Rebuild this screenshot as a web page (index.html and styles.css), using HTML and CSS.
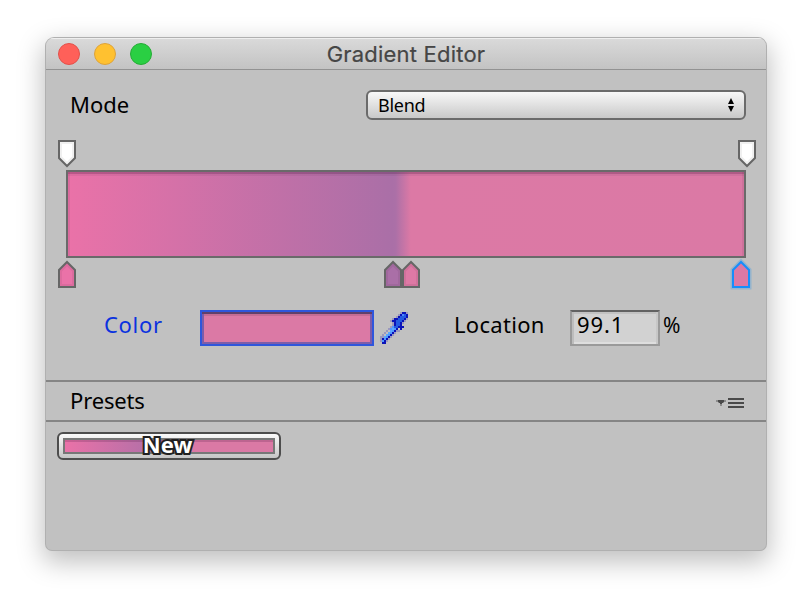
FILE: index.html
```html
<!DOCTYPE html>
<html lang="en">
<head>
<meta charset="utf-8">
<title>Gradient Editor</title>
<link rel="stylesheet" href="styles.css">
</head>
<body>
<main class="window">
  <header class="titlebar">
    <div class="lights"><i class="light close"></i><i class="light minimize"></i><i class="light zoom"></i></div>
    <h1 class="title"><span class="t-title">Gradient Editor</span></h1>
  </header>
  <section class="mode-row">
    <label class="t-mode">Mode</label>
    <div class="select"><span class="t-blend">Blend</span>
      <svg class="arrows" width="8" height="14" viewBox="0 0 8 14"><path d="M4 0L7 6H1ZM1 8H7L4 14Z"/></svg>
    </div>
  </section>
  <section class="editor">
    <div class="keys alpha">
      <svg class="key" width="18" height="28" viewBox="0 0 18 28"><path class="edge" d="M1 1H17V18L9 26L1 18Z" fill="#fff"/><path class="shade" d="M3 3H15V17L9 23L3 17Z"/></svg>
      <svg class="key" width="18" height="28" viewBox="0 0 18 28"><path class="edge" d="M1 1H17V18L9 26L1 18Z" fill="#fff"/><path class="shade" d="M3 3H15V17L9 23L3 17Z"/></svg>
    </div>
    <div class="ramp"></div>
    <div class="keys colors">
      <svg class="key" width="18" height="28" viewBox="0 0 18 28"><path class="edge" d="M1 27H17V10L9 2L1 10Z" fill="#ea72a8"/><path class="shade" d="M3 25H15V11L9 5L3 11Z"/></svg>
      <svg class="key middle" width="18" height="28" viewBox="0 0 18 28"><path class="edge" d="M1 27H17V10L9 2L1 10Z" fill="#aa6fa7"/><path class="shade" d="M3 25H15V11L9 5L3 11Z"/></svg>
      <svg class="key" width="18" height="28" viewBox="0 0 18 28"><path class="edge" d="M1 27H17V10L9 2L1 10Z" fill="#de79a5"/><path class="shade" d="M3 25H15V11L9 5L3 11Z"/></svg>
      <svg class="key selected" width="18" height="28" viewBox="0 0 18 28"><path class="glow" d="M1 27H17V10L9 2L1 10Z"/><path class="edge" d="M1 27H17V10L9 2L1 10Z" fill="#db79a5"/></svg>
    </div>
  </section>
  <section class="fields">
    <label class="color-label"><span class="t-color">Color</span></label>
    <div class="swatch"></div>
    <svg class="dropper" width="32" height="36" viewBox="0 0 16 18" shape-rendering="crispEdges">
      <path fill="#9a98bf" d="M11 1h1v1h-1zM14 1h1v1h-1zM10 2h1v1h-1zM9 3h1v1H9zM7 4h1v1H7zM14 4h1v1h-1zM6 5h1v1H6zM13 5h1v1h-1zM7 6h1v1H7zM12 6h1v1h-1zM7 7h1v1H7zM6 8h1v1H6zM5 9h1v1H5zM4 10h1v1H4zM3 11h1v1H3zM2 12h1v1H2zM1 13h2v1H1zM1 14h1v1H1zM1 15h1v1H1zM9 10h1v1H9zM8 11h1v1H8zM7 12h1v1H7zM6 13h1v1H6zM5 14h1v1H5zM4 15h1v1H4zM10 10h1v1h-1z"/>
      <path fill="#0b13b8" d="M12 1h2v1h-2zM11 2h1v1h-1zM14 2h1v2h-1zM10 3h1v1h-1zM8 4h2v1H8zM13 4h1v1h-1zM7 5h2v1H7zM12 5h1v1h-1zM8 6h1v2H8zM11 6h1v1h-1zM11 7h1v1h-1zM10 8h3v1h-3zM9 9h1v1H9zM11 9h1v1h-1zM8 10h1v1H8zM7 11h1v1H7zM6 12h1v1H6zM5 13h1v1H5zM4 14h1v1H4zM2 14h1v1H2zM2 16h2v1H2zM3 15h1v1H3z"/>
      <path fill="#245ae1" d="M12 2h2v2h-1v1h-1v1h-1v1h-1v1H9V5h1V4h1V3h1zM8 8h2v1H8zM10 6h1v2h-1z"/>
      <path fill="#4f97ff" d="M7 8h1v1h1v1H8v1H7v1H6v1H5v1H4v1H3v1H2v-1h1v-2h1v-1h1v-1h1V9h1z"/>
      <path fill="#5ca8ff" d="M7 9h1v1H7zM6 10h1v1H6zM5 11h1v1H5zM4 12h1v1H4zM3 13h1v1H3z"/>
      <path fill="#4b85ff" d="M12 2h1v1h-1z"/>
    </svg>
    <label class="location-label"><span class="t-location">Location</span></label>
    <div class="number"><span class="t-number">99.1</span></div>
    <span class="t-percent">%</span>
  </section>
  <section class="presets-head">
    <h2 class="t-presets">Presets</h2>
    <svg class="menu" width="28" height="12" viewBox="0 0 28 12"><path fill="#8c8c8c" d="M0 2h2v2H0zM8 2h2v2H8zM2 4h2v1H2zM6 4h2v1H6zM4 6h2v2H4z"/><path fill="#4a4a4a" d="M2 2h6v2H7v1H6v1H4V5H3V4H2zM12 0h16v2H12zM12 4h16v2H12zM12 8h16v2H12z"/></svg>
  </section>
  <section class="presets">
    <button class="preset"><span class="preset-ramp"><span class="t-new">New</span></span></button>
  </section>
</main>
</body>
</html>
```
FILE: styles.css
```css
* { box-sizing: border-box; }
body { margin: 0; padding: 38px 46px; height: 604px; overflow: hidden; background: #fff; font-family: "Noto Sans", sans-serif; color: #000; }
h1, h2 { margin: 0; font-weight: 400; }
.window { width: 720px; height: 512px; border-radius: 8px 8px 6px 6px; background: #c1c1c1; box-shadow: 0 0 0 1px #b0b0b0, 0 9px 26px 3px rgba(0,0,0,.25); overflow: hidden; }
.titlebar { display: grid; grid-template-columns: 120px 1fr 120px; align-items: center; height: 32px; background: linear-gradient(#dadada, #c3c3c3); border-bottom: 1px solid #929292; box-shadow: inset 0 1px #efefef; }
.lights { display: flex; gap: 14px; padding-left: 12px; }
.light { width: 22px; height: 22px; border-radius: 50%; border: 1px solid; }
.close { background: #ff6059; border-color: #e2504a; }
.minimize { background: #ffc130; border-color: #dda33a; }
.zoom { background: #2acf43; border-color: #25ac35; }
.title { text-align: center; font: 22px/30px Inter, sans-serif; color: #464646; white-space: nowrap; }
.t-title { letter-spacing: .2px; -webkit-text-stroke: .2px #464646; }
.mode-row { display: flex; justify-content: space-between; padding: 20px 20px 0 24px; height: 70px; font-size: 22px; line-height: 28px; }
.select { display: flex; align-items: center; justify-content: space-between; width: 380px; height: 30px; padding: 0 9px 0 10px; border: 2px solid #6b6b6b; border-radius: 6px; background: linear-gradient(#f8f8f8, #c9c9c9); font-size: 18px; line-height: 26px; }
.t-blend { letter-spacing: -.25px; }
.editor { height: 152px; }
.keys { display: flex; height: 28px; padding-left: 12px; }
.alpha { justify-content: space-between; padding-right: 10px; }
.key { display: block; flex: none; overflow: visible; }
.edge { stroke: #666; stroke-width: 2; }
.shade { fill: none; stroke: rgba(0,0,0,.06); stroke-width: 2; }
.ramp { height: 88px; margin: 2px 20px 2px; border: 2px solid #6a6a6a; background: linear-gradient(90deg, #ea72a8 0%, #aa6fa7 48%, #ac70a7 48.5%, #dc79a5 50.7%, #db79a5 100%); box-shadow: inset 0 2px rgba(70,20,60,.23), inset 0 4px rgba(70,20,60,.08), inset 2px 0 rgba(0,0,0,.06), inset -2px 0 rgba(0,0,0,.06); }
.middle { margin-left: 308px; }
.selected { margin-left: 312px; }
.selected .edge { stroke: #168efb; }
.glow { fill: none; stroke: #529fdf; stroke-width: 5; opacity: .4; }
.fields { display: flex; height: 90px; padding: 18px 0 0 58px; font-size: 22px; line-height: 28px; }
.color-label { width: 96px; color: #0b32df; }
.t-color { letter-spacing: .7px; }
.swatch { width: 174px; height: 36px; border: 2px solid #2f56dc; background: #db79a5; box-shadow: inset 0 2px #60406c, inset 2px 0 #7c5da9, inset 0 -2px #7c5da9, inset -2px 0 #7c5da9, inset 0 4px #c46c95; }
.dropper { margin-left: 4px; }
.location-label { width: 116px; margin-left: 44px; }
.t-location { letter-spacing: .3px; }
.number { width: 90px; height: 36px; padding-left: 5px; border: 2px solid #9a9a9a; border-top-color: #626262; background: #d2d2d2; box-shadow: inset 2px 0 #bdbdbd, inset -2px 0 #c7c7c7, inset 0 2px #c2c2c2, inset 0 -2px #dedede; line-height: 25px; }
.t-number { letter-spacing: .9px; }
.t-percent { margin-left: 3px; font-size: 21px; line-height: 30px; }
.presets-head { display: flex; justify-content: space-between; height: 42px; padding: 4px 22px 0 24px; border-top: 2px solid #858585; border-bottom: 2px solid #858585; line-height: 28px; margin-top: -2px; }
.t-presets { font-size: 22px; letter-spacing: -.15px; }
.menu { margin-top: 12px; }
.presets { padding: 10px 11px; }
.preset { display: block; width: 224px; height: 28px; padding: 4px; border: 2px solid #4d4d4d; border-radius: 6px; background: linear-gradient(#fafafa, #c5c5c5); }
.preset-ramp { display: flex; justify-content: center; align-items: center; width: 212px; height: 16px; border: 2px solid #777; background: linear-gradient(90deg, #ea72a8, #aa6fa7 48%, #db79a5 51%); box-shadow: inset 0 2px rgba(70,20,60,.2); }
.t-new { margin: -5px 3px 0 0; color: #fff; font: 700 22px/20px "Noto Sans", sans-serif; letter-spacing: .1px; -webkit-text-stroke: 4px #202020; paint-order: stroke fill; }
```
